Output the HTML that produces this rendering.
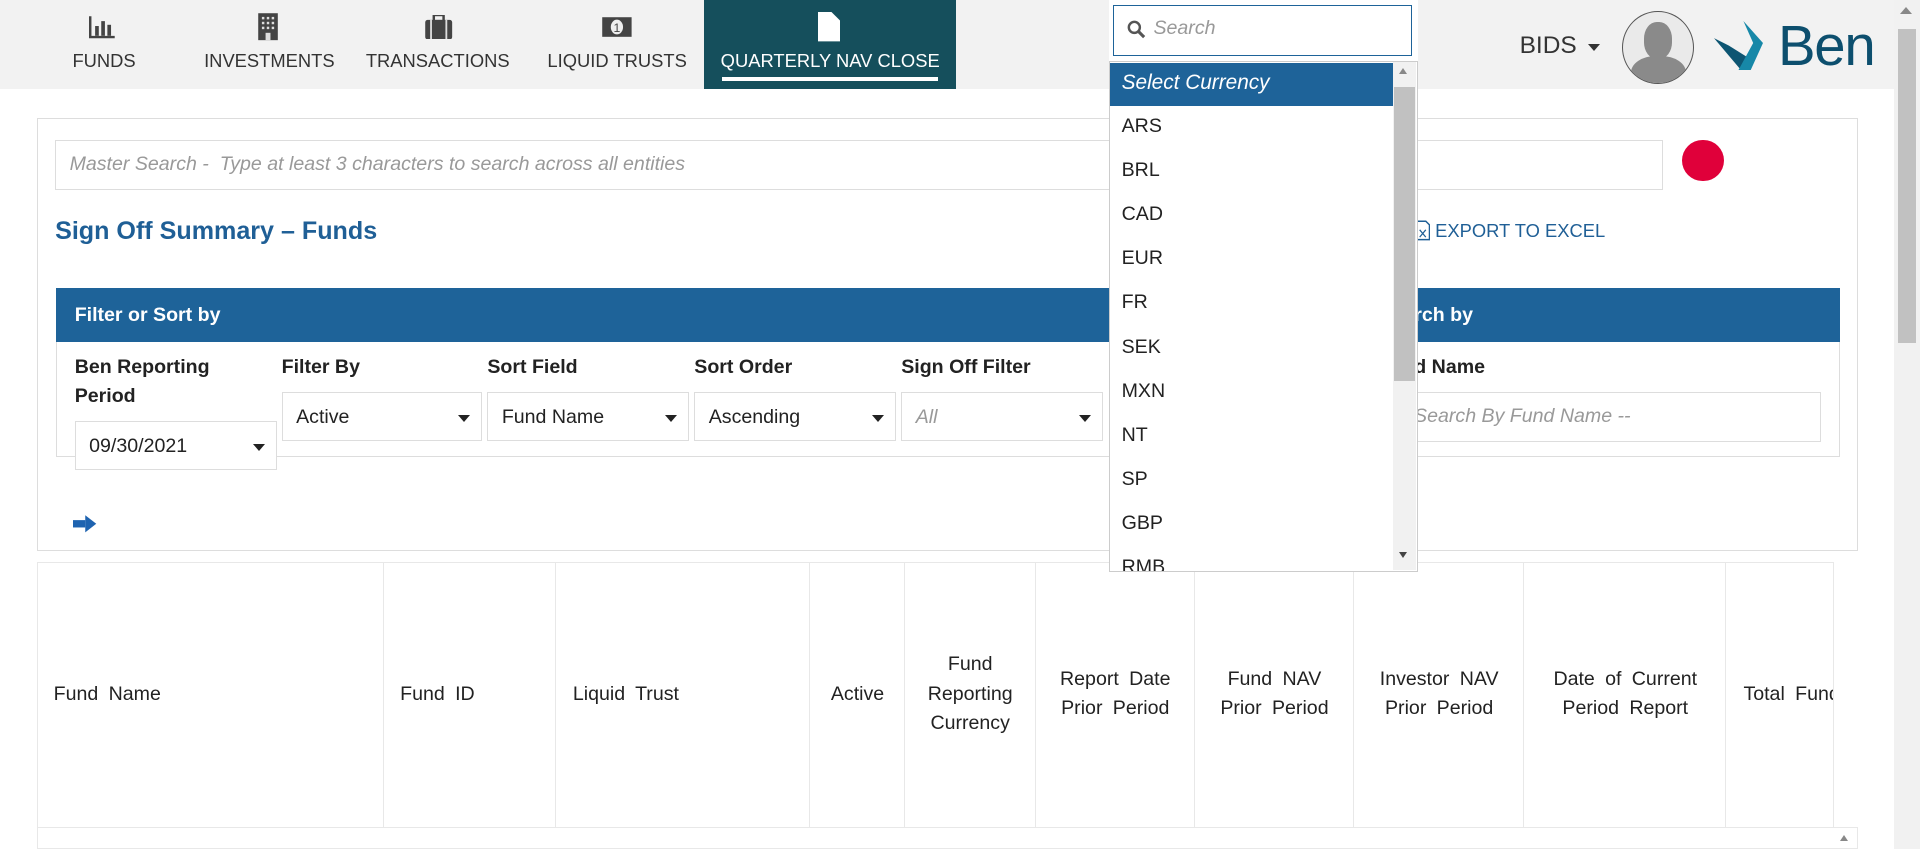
<!DOCTYPE html>
<html><head><meta charset="utf-8"><style>
html,body{margin:0;padding:0;background:#fff;overflow:hidden}
#r{zoom:1.2244898;width:1568px;height:693px;position:relative;font-family:"Liberation Sans",sans-serif;color:#222;overflow:hidden}
.a{position:absolute}
.nav{position:absolute;top:0;height:73px;text-align:center;font-size:15px;color:#333}
.nav .t{position:absolute;top:41px;left:0;right:0;white-space:nowrap}
.lbl{position:absolute;font-weight:bold;font-size:16px;color:#222;line-height:24px}
.sel{position:absolute;height:40px;border:1px solid #ddd;box-sizing:border-box;font-size:16px;line-height:40px;padding-left:11px;background:#fff}
.sel:after{content:"";position:absolute;right:9px;top:18px;border:5px solid transparent;border-top:6px solid #222}
.th{position:absolute;top:459px;height:216px;border-left:1px solid #e8e8e8;display:flex;align-items:center;justify-content:center;text-align:center;font-size:16px;line-height:24px;color:#222;word-spacing:4px}
.it{position:absolute;left:916px;font-size:16px;color:#222}
</style></head><body><div id="r">
<div class="a" style="left:0;top:0;width:1547px;height:73px;background:#f2f2f2"></div>
<div class="nav" style="left:45px;width:80px"><svg class="a" style="left:28px;top:12px" width="22" height="20"><path d="M1 1v17h20" stroke="#444" stroke-width="2" fill="none"/><rect x="5" y="9" width="3" height="8" fill="#444"/><rect x="10" y="5" width="3" height="12" fill="#444"/><rect x="15" y="8" width="3" height="9" fill="#444"/></svg><div class="t">FUNDS</div></div>
<div class="nav" style="left:160px;width:120px"><svg class="a" style="left:50px;top:10px" width="18" height="24"><rect x="1" y="1" width="16" height="22" fill="#444"/><g fill="#ddd"><rect x="4" y="4" width="2" height="2"/><rect x="8" y="4" width="2" height="2"/><rect x="12" y="4" width="2" height="2"/><rect x="4" y="8" width="2" height="2"/><rect x="8" y="8" width="2" height="2"/><rect x="12" y="8" width="2" height="2"/><rect x="4" y="12" width="2" height="2"/><rect x="8" y="12" width="2" height="2"/><rect x="12" y="12" width="2" height="2"/><rect x="7" y="17" width="4" height="6"/></g></svg><div class="t">INVESTMENTS</div></div>
<div class="nav" style="left:295px;width:125px"><svg class="a" style="left:51px;top:12px" width="24" height="20"><rect x="1" y="4" width="22" height="16" rx="2" fill="#444"/><rect x="8" y="0" width="8" height="5" fill="none" stroke="#444" stroke-width="2"/><rect x="5" y="4" width="1.5" height="16" fill="#ddd"/><rect x="17.5" y="4" width="1.5" height="16" fill="#ddd"/></svg><div class="t">TRANSACTIONS</div></div>
<div class="nav" style="left:440px;width:128px"><svg class="a" style="left:51px;top:13px" width="26" height="18"><rect x="1" y="1" width="24" height="16" fill="#444"/><ellipse cx="13" cy="9" rx="5" ry="6" fill="#eee"/><text x="13" y="13" font-size="10" text-anchor="middle" fill="#444" font-family="Liberation Sans">1</text></svg><div class="t">LIQUID TRUSTS</div></div>
<div class="a" style="left:575px;top:0;width:206px;height:73px;background:#154f5c"></div>
<div class="nav" style="left:575px;width:206px;color:#fff"><svg class="a" style="left:93px;top:10px" width="18" height="24"><path d="M0 0h11l7 7v17h-18z" fill="#fff"/></svg><div class="t">QUARTERLY NAV CLOSE</div></div>
<div class="a" style="left:590px;top:63px;width:176px;height:3px;background:#fff"></div>
<div class="a" style="left:1241px;top:26px;font-size:20px;color:#333">BIDS</div>
<div class="a" style="left:1297px;top:36px;border:5px solid transparent;border-top:6px solid #333"></div>
<div class="a" style="left:1325px;top:9px;width:57px;height:58px;border-radius:50%;border:1px solid #555;background:#eaeaea;overflow:hidden"><div class="a" style="left:17px;top:8px;width:23px;height:30px;border-radius:45%;background:#8a8a8a"></div><div class="a" style="left:6px;top:36px;width:45px;height:30px;border-radius:45% 45% 0 0;background:#8a8a8a"></div></div>
<svg class="a" style="left:1400px;top:17px" width="50" height="42"><path d="M0 14 L22 40 L28 30 L12 20Z" fill="#0d5572"/><path d="M24 0 L40 18 L30 40 L20 40 L32 18Z" fill="#1788a8"/></svg>
<div class="a" style="left:1452px;top:12px;font-size:46px;color:#0d4f6e;letter-spacing:-1px;line-height:50px">Ben</div>
<div class="a" style="left:1547px;top:0;width:21px;height:693px;background:#f1f1f1"></div>
<div class="a" style="left:1550px;top:24px;width:15px;height:256px;background:#c1c1c1"></div>
<div class="a" style="left:1552px;top:6px;border:5px solid transparent;border-bottom:6px solid #888;border-top:0"></div>
<div class="a" style="left:30px;top:96px;width:1487px;height:354px;border:1px solid #ddd;box-sizing:border-box"></div>
<div class="a" style="left:45px;top:114px;width:1313px;height:41px;border:1px solid #ddd;box-sizing:border-box;font-size:16px;line-height:39px;padding-left:11px;color:#999;font-style:italic">Master Search -&nbsp; Type at least 3 characters to search across all entities</div>
<div class="a" style="left:1374px;top:114px;width:34px;height:34px;border-radius:50%;background:#e0003a"></div>
<div class="a" style="left:45px;top:177px;font-size:20.5px;font-weight:bold;color:#1f5f96">Sign Off Summary – Funds</div>
<svg class="a" style="left:1156px;top:180px" width="12" height="17"><path d="M1 1h7l3 3v12h-10z" fill="none" stroke="#1f5f96" stroke-width="1.2"/><path d="M3 8l5 6M8 8l-5 6" stroke="#1f5f96" stroke-width="1"/></svg>
<div class="a" style="left:1172px;top:180px;font-size:15px;color:#1f5f96">EXPORT TO EXCEL</div>
<div class="a" style="left:46px;top:235px;width:1457px;height:138px;border:1px solid #ddd;box-sizing:border-box"></div>
<div class="a" style="left:46px;top:235px;width:1457px;height:44px;background:#1e6399"></div>
<div class="a" style="left:61px;top:248px;color:#fff;font-weight:bold;font-size:16px">Filter or Sort by</div>
<div class="a" style="left:1155px;top:248px;color:#fff;font-weight:bold;font-size:16px">rch by</div>
<div class="lbl" style="left:61px;top:288px">Ben Reporting<br>Period</div>
<div class="lbl" style="left:230px;top:288px">Filter By</div>
<div class="lbl" style="left:398px;top:288px">Sort Field</div>
<div class="lbl" style="left:567px;top:288px">Sort Order</div>
<div class="lbl" style="left:736px;top:288px">Sign Off Filter</div>
<div class="lbl" style="left:1155px;top:288px">d Name</div>
<div class="sel" style="left:61px;top:344px;width:165px">09/30/2021</div>
<div class="sel" style="left:230px;top:320px;width:164px">Active</div>
<div class="sel" style="left:398px;top:320px;width:165px">Fund Name</div>
<div class="sel" style="left:567px;top:320px;width:165px">Ascending</div>
<div class="sel" style="left:736px;top:320px;width:165px;color:#999;font-style:italic">All</div>
<div class="a" style="left:1140px;top:320px;width:347px;height:41px;border:1px solid #ddd;box-sizing:border-box;font-size:16px;line-height:39px;padding-left:14px;color:#999;font-style:italic">Search By Fund Name --</div>
<svg class="a" style="left:60px;top:420px" width="20" height="16"><rect x="0" y="5" width="10" height="6" fill="#1e63b0"/><path d="M10 1 L19 8 L10 15Z" fill="#1e63b0"/></svg>
<div class="a" style="left:30px;top:459px;width:1487px;height:234px;border:1px solid #e8e8e8;box-sizing:border-box"></div>
<div class="a" style="left:30px;top:675px;width:1487px;height:1px;background:#e8e8e8"></div>
<div class="th" style="left:30px;width:283px;justify-content:flex-start;padding-left:13px;box-sizing:border-box">Fund Name</div>
<div class="th" style="left:313px;width:140px;justify-content:flex-start;padding-left:13px;box-sizing:border-box">Fund ID</div>
<div class="th" style="left:453px;width:208px;justify-content:flex-start;padding-left:14px;box-sizing:border-box">Liquid Trust</div>
<div class="th" style="left:661px;width:77px">Active</div>
<div class="th" style="left:738px;width:107px">Fund<br>Reporting<br>Currency</div>
<div class="th" style="left:845px;width:130px">Report Date<br>Prior Period</div>
<div class="th" style="left:975px;width:130px">Fund NAV<br>Prior Period</div>
<div class="th" style="left:1105px;width:139px">Investor NAV<br>Prior Period</div>
<div class="th" style="left:1244px;width:165px">Date of Current<br>Period Report</div>
<div class="th" style="left:1409px;width:88px;justify-content:flex-start;padding-left:14px;box-sizing:border-box;overflow:hidden;white-space:nowrap">Total Fund</div>
<div class="th" style="left:1497px;width:20px;background:#fff"></div>
<div class="a" style="left:1503px;top:682px;border:4px solid transparent;border-bottom:5px solid #888;border-top:0"></div>
<div class="a" style="left:906px;top:0;width:252px;height:467px;background:#fff"></div>
<div class="a" style="left:909px;top:4px;width:244px;height:42px;border:1px solid #1e6399;box-sizing:border-box"></div>
<svg class="a" style="left:920px;top:16px" width="16" height="16"><circle cx="6" cy="6" r="4.5" stroke="#555" stroke-width="2" fill="none"/><path d="M9.5 9.5 L14 14" stroke="#555" stroke-width="2.5"/></svg>
<div class="a" style="left:942px;top:14px;font-size:16px;color:#999;font-style:italic">Search</div>
<div class="a" style="left:906px;top:50px;width:252px;height:417px;border:1px solid #ccc;box-sizing:border-box;overflow:hidden">
<div class="a" style="left:0;top:1px;width:231px;height:35px;background:#1e6399"></div>
<div class="a" style="left:231px;top:0;width:19px;height:415px;background:#f1f1f1"></div>
<div class="a" style="left:232px;top:20px;width:17px;height:240px;background:#c1c1c1"></div>
<div class="a" style="left:236px;top:5px;border:4px solid transparent;border-bottom:5px solid #888;border-top:0"></div>
<div class="a" style="left:236px;top:400px;border:4px solid transparent;border-top:5px solid #444;border-bottom:0"></div>
</div>
<div class="a" style="left:916px;top:58px;font-size:17px;color:#fff;font-style:italic">Select Currency</div>
<div class="it" style="top:94px">ARS</div><div class="it" style="top:130px">BRL</div><div class="it" style="top:166px">CAD</div><div class="it" style="top:202px">EUR</div><div class="it" style="top:238px">FR</div><div class="it" style="top:274px">SEK</div><div class="it" style="top:310px">MXN</div><div class="it" style="top:346px">NT</div><div class="it" style="top:382px">SP</div><div class="it" style="top:418px">GBP</div>
<div class="a" style="left:907px;top:452px;width:230px;height:14px;overflow:hidden"><div class="it" style="left:9px;top:2px">RMB</div></div>
</div></body></html>
